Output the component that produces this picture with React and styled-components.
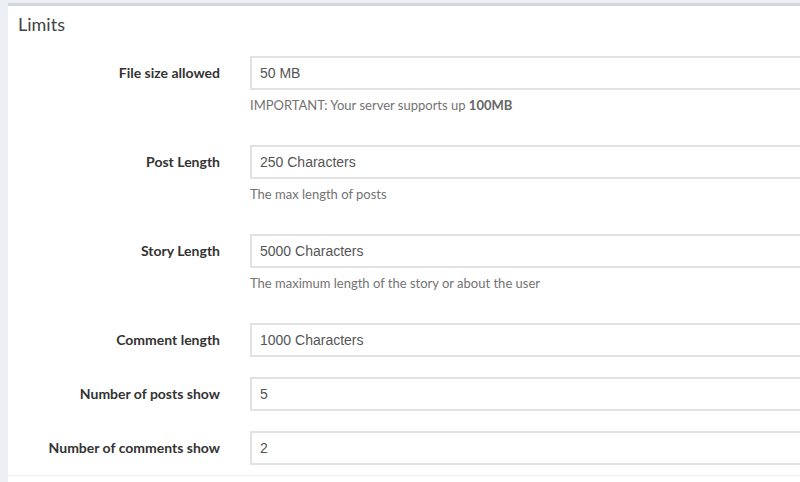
import styled, { createGlobalStyle } from 'styled-components'

const Global = createGlobalStyle`
    html, body {
        margin : 0;
        background : #ecf0f5;
        font-family : Lato, "Open Sans", sans-serif;
        color : #333;
        overflow : hidden;
    }
`

const Page = styled.div`
    padding : 3px 0 0 8px;
    height : 479px;
    overflow : hidden;
`

const Box = styled.div`
    background : #fff;
    border-top : 3px solid #d2d6de;
    margin-right : -40px;
`

const Header = styled.div`
    padding : 8px 10px 11px;
`

const Title = styled.h3`
    margin : 0;
    font-size : 18px;
    font-weight : 400;
    line-height : 21px;
    color : #444;
`

const Body = styled.div`
    padding : 10px 10px 0;
`

const Group = styled.div`
    display : grid;
    grid-template-columns : 202px 1fr;
    column-gap : 30px;
    margin-bottom : 20px;

    &:last-child {
        margin-bottom : 10px;
    }
`

const Label = styled.label`
    text-align : right;
    font-weight : 700;
    font-size : 14px;
    padding-top : 7px;
    line-height : 20px;
    color : #333;
`

const Field = styled.div`
    display : flex;
    flex-direction : column;
`

const Input = styled.input`
    box-sizing : border-box;
    height : 34px;
    border : 2px solid #e2e2e2;
    padding : 0 8px;
    font-family : "Liberation Sans", Arial, sans-serif;
    font-size : 14px;
    color : #555;
    background : #fff;
    outline : none;
`

const Help = styled.span`
    margin : 5px 0 10px;
    font-size : 13px;
    line-height : 20px;
    color : #737373;

    b {
        color : #666;
    }
`

const Footer = styled.div`
    border-top : 1px solid #f0f0f0;
    height : 20px;
`

const rows = [
    { label : 'File size allowed', value : '50 MB', help : <>IMPORTANT: Your server supports up <b>100MB</b></> },
    { label : 'Post Length', value : '250 Characters', help : 'The max length of posts' },
    { label : 'Story Length', value : '5000 Characters', help : 'The maximum length of the story or about the user' },
    { label : 'Comment length', value : '1000 Characters' },
    { label : 'Number of posts show', value : '5' },
    { label : 'Number of comments show', value : '2' },
]

export default function App() {
    return (
        <Page>
            <Global />
            <Box>
                <Header>
                    <Title>Limits</Title>
                </Header>
                <Body>
                    {rows.map(r => (
                        <Group key={r.label}>
                            <Label>{r.label}</Label>
                            <Field>
                                <Input defaultValue={r.value} />
                                {r.help && <Help>{r.help}</Help>}
                            </Field>
                        </Group>
                    ))}
                </Body>
                <Footer />
            </Box>
        </Page>
    )
}
